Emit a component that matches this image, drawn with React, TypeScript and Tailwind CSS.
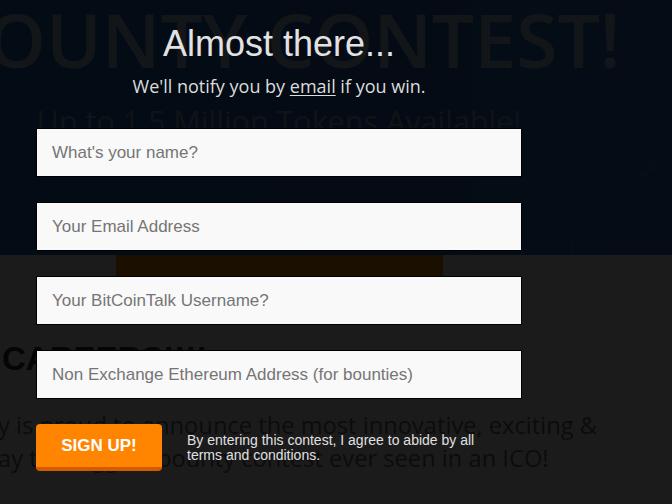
import React from 'react';

// Signup modal over the bounty contest landing page.
// The page behind is drawn in its normal colours and dimmed by a black overlay.

const fields = [
  "What's your name?",
  'Your Email Address',
  'Your BitCoinTalk Username?',
  'Non Exchange Ethereum Address (for bounties)',
];

function PageBehind() {
  return (
    <div className="flex flex-col">
      <header className="relative h-[255px] overflow-hidden bg-gradient-to-r from-[#2262b4] via-[#2464b6] to-[#2f72c6]">
        <svg className="absolute inset-0 h-full w-full" viewBox="0 0 672 255" fill="none">
          <g stroke="#8fb4e6" strokeOpacity="0.35" strokeWidth="1">
            <line x1="510" y1="30" x2="540" y2="0" />
            <line x1="520" y1="25" x2="560" y2="0" />
            <line x1="570" y1="220" x2="660" y2="163" />
            <line x1="570" y1="220" x2="572" y2="255" />
            <line x1="600" y1="255" x2="655" y2="160" />
            <line x1="20" y1="210" x2="60" y2="180" />
          </g>
        </svg>
        <div className="relative flex w-[558px] flex-col items-center">
          <div className="mt-[2px] flex w-full justify-center whitespace-nowrap font-['Open_Sans',sans-serif] text-[75px] font-semibold leading-none text-[#aec6de]">
            BOUNTY CONTEST!
          </div>
          <div className="mt-[29px] flex w-full justify-center whitespace-nowrap font-['Open_Sans',sans-serif] text-[30.5px] leading-none text-[#94adc8]">
            Up to 1.5 Million Tokens Available!
          </div>
        </div>
      </header>
      <div className="flex w-[559px] justify-center">
        <div className="h-[22px] w-[327px] bg-[#f59100]" />
      </div>
      <section className="flex flex-col font-['Open_Sans',sans-serif]">
        <h2 className="ml-[2px] mt-[65px] whitespace-nowrap font-['Liberation_Sans',sans-serif] text-[33px] font-bold leading-none text-[#2e2e2e]">
          CAREERS!!!!
        </h2>
        <div className="ml-[-2px] mt-[34px] flex flex-col whitespace-nowrap text-[23.7px] leading-[33px] text-[#6e6e6e]">
          <span>y is proud to announce the most innovative, exciting &amp;</span>
          <span>ay the biggest bounty contest ever seen in an ICO!</span>
        </div>
      </section>
    </div>
  );
}

export default function App() {
  return (
    <div className="relative h-[504px] w-[672px] overflow-hidden bg-[#f5f5f5]">
      <PageBehind />
      <div className="absolute inset-0 bg-black/[0.89]" />

      <div className="absolute inset-0 pl-[36px]">
        <div className="flex w-[486px] flex-col">
          <h1 className="mt-[26px] text-center font-['Liberation_Sans',sans-serif] text-[36px] leading-none text-[#e2e2e2]">
            Almost there...
          </h1>
          <p className="mt-[15px] text-center font-['Open_Sans',sans-serif] text-[18px] leading-[18px] text-[#dcdcdc]">
            We'll notify you by <span className="underline underline-offset-2">email</span> if you win.
          </p>

          <div className="mt-[33px] flex flex-col gap-[25px]">
            {fields.map(f => (
              <input
                key={f}
                readOnly
                placeholder={f}
                className="h-[49px] w-full border border-black bg-[#f9f9f9] px-[15px] font-['Liberation_Sans',sans-serif] text-[17px] text-[#333] outline-none placeholder:text-[#757575]"
              />
            ))}
          </div>

          <div className="mt-[25px] flex items-center gap-[25px]">
            <button
              type="button"
              className="h-[47px] w-[126px] shrink-0 rounded-[4px] border-b-4 border-[#d65a00] bg-[#ff8400] font-['Liberation_Sans',sans-serif] text-[17px] font-bold text-white"
            >
              SIGN UP!
            </button>
            <p className="max-w-[312px] font-['Liberation_Sans',sans-serif] text-[14px] leading-[15px] text-[#e0e0e0]">
              By entering this contest, I agree to abide by all terms and conditions.
            </p>
          </div>
        </div>
      </div>
    </div>
  );
}
